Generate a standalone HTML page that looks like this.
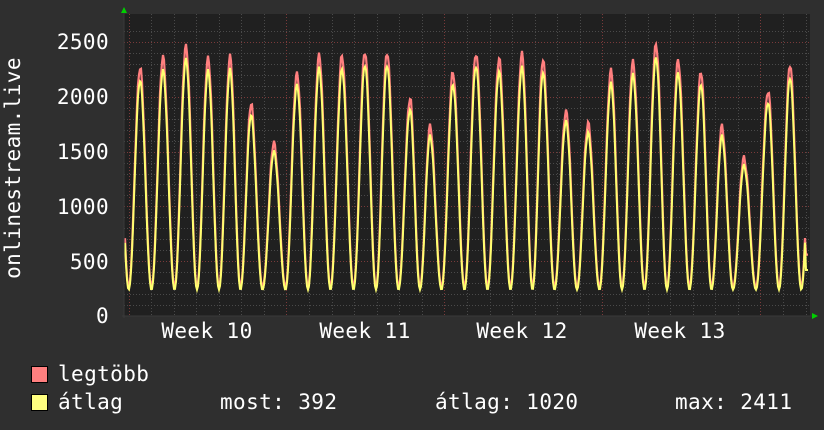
<!DOCTYPE html>
<html><head><meta charset="utf-8"><style>
html,body{margin:0;padding:0;background:#2f2f2f;}
svg{display:block}
text{font-family:"DejaVu Sans Mono","Liberation Mono",monospace;fill:#fff;font-size:21px;letter-spacing:0.4px}
</style></head><body>
<svg id="s" width="824" height="430" xmlns="http://www.w3.org/2000/svg">
<rect width="824" height="430" fill="#2f2f2f"/>
<rect x="124" y="14" width="686" height="302" fill="#202020"/>
<g id="grid"></g>
<polyline id="red" fill="none" stroke="#ff7f7f" stroke-width="2.2" stroke-linejoin="miter"/>
<polyline id="yel" fill="none" stroke="#ffff70" stroke-width="2" stroke-linejoin="miter"/>
<line x1="124" y1="12" x2="124" y2="318" stroke="#3a3a3a" stroke-width="1"/>
<line x1="122" y1="316" x2="812" y2="316" stroke="#3a3a3a" stroke-width="1"/>
<polygon points="121,13 127,13 124,7" fill="#00d000"/>
<polygon points="812,313 812,319 818,316" fill="#00d000"/>
<g text-anchor="end">
<text x="109" y="49">2500</text>
<text x="109" y="104">2000</text>
<text x="109" y="159">1500</text>
<text x="109" y="214">1000</text>
<text x="109" y="269">500</text>
<text x="109" y="323">0</text>
</g>
<g text-anchor="middle">
<text x="207" y="338">Week 10</text>
<text x="365" y="338">Week 11</text>
<text x="522" y="338">Week 12</text>
<text x="680" y="338">Week 13</text>
</g>
<text transform="translate(20,168) rotate(-90)" text-anchor="middle">onlinestream.live</text>
<rect x="31.5" y="366.5" width="16" height="16" fill="#ff7f7f" stroke="#000"/>
<rect x="31.5" y="394.5" width="16" height="16" fill="#ffff7f" stroke="#000"/>
<text x="58" y="381">legtöbb</text>
<text x="58" y="409">átlag</text>
<text x="220" y="409">most: 392</text>
<text x="435" y="409">átlag: 1020</text>
<text x="675" y="409">max: 2411</text>
</svg>
<script>
(function(){
var g=document.getElementById('grid'),h='';
var Y=function(v){return 316-v*0.1096;};
for(var v=100;v<=2600;v+=100){var y=Math.round(Y(v))+0.5;if(y<14)break;
 var maj=v%500==0;h+='<line x1="124" x2="810" y1="'+y+'" y2="'+y+'" stroke="'+(maj?'#7a3a3a':'#4a4a4a')+'" stroke-dasharray="1,2"/>';}
for(var k=0;k<31;k++){var x=128.5+k*22.57;if(x>810)break;var xx=Math.round(x)+0.5;var maj=(k%7==0);
 h+='<line y1="14" y2="316" x1="'+xx+'" x2="'+xx+'" stroke="'+(maj?'#7a3a3a':'#4a4a4a')+'" stroke-dasharray="1,2"/>';}
g.innerHTML=h;
var px=[140,163,186,208,230,251,274,297,319,342,365,387,410,430,453,476,499,522,543,566,588,611,633,656,678,701,722,744,768,790];
var py=[68,58,45,57,57,105,143,72,55,57,51,51,99,127,73,52,59,55,60,110,123,72,62,43,60,73,127,157,91,66];
var pk=py.map(function(y){return (316-y)/0.1096;});
var r=[],yl=[];
for(var x=125;x<=808;x++){
 var i=0;while(i<px.length-1&&px[i+1]<=x)i++;
 var a,b,pa,pb;
 if(x<px[0]){a=px[0]-22.6;b=px[0];pa=pk[0];pb=pk[0];}
 else if(i>=px.length-1){a=px[i];b=px[i]+22.6;pa=pk[i];pb=pk[i];}
 else{a=px[i];b=px[i+1];pa=pk[i];pb=pk[i+1];}
 var t=(x-a)/(b-a);
 var f=Math.pow((1+Math.cos(2*Math.PI*t))/2,1.05);
 var pkv=t<0.5?pa:pb;
 var base=265;
 var n=Math.sin(x*1.7)*25+Math.sin(x*0.63)*15;
 var vr=base+(pkv-base)*f+n*f;
 var vy=240+(pkv*0.95-240)*f+n*0.6*f;
 if(x>=806){vr=560;vy=420;}
 r.push(x+','+Y(vr).toFixed(1));yl.push(x+','+Y(vy).toFixed(1));
}
document.getElementById('red').setAttribute('points',r.join(' '));
document.getElementById('yel').setAttribute('points',yl.join(' '));
})();
</script>
</body></html>
